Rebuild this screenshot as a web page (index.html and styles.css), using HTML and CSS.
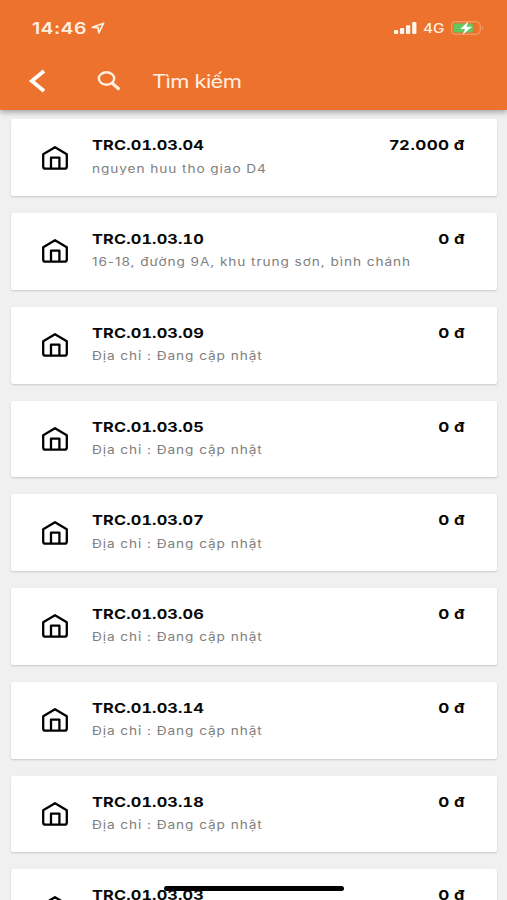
FILE: index.html
```html
<!DOCTYPE html>
<html lang="vi">
<head>
<meta charset="utf-8">
<title>Tìm kiếm</title>
<link rel="stylesheet" href="styles.css">
</head>
<body>
<svg class="defs" width="0" height="0" aria-hidden="true">
  <symbol id="home" viewBox="0 0 28 26">
    <path d="M2.200 9.200 14 2.200 25.800 9.200V21.500Q25.800 23.700 23.600 23.700H4.400Q2.200 23.700 2.200 21.500Z M10 23.700V12.700H18.400V23.700" fill="none" stroke="#000" stroke-width="2.300" stroke-linejoin="round"/>
  </symbol>
</svg>
<div class="screen">
  <header class="header">
    <div class="status">
      <span class="time"><span class="wide">14:46</span></span>
      <svg class="location" width="14" height="12" viewBox="0 0 14 12"><path d="M1.300 5.300 12.600 1.200 7.800 10.800 7 5.600Z" fill="none" stroke="#fff0e2" stroke-width="1.700" stroke-linejoin="round"/></svg>
      <svg class="signal" width="23" height="12" viewBox="0 0 23 12" fill="#fff7ef"><rect x="0" y="8" width="4.200" height="4" rx="1"/><rect x="6" y="6" width="4.200" height="6" rx="1"/><rect x="12" y="3.200" width="4.200" height="8.800" rx="1"/><rect x="18.200" y="0" width="4.200" height="12" rx="1"/></svg>
      <span class="network"><span class="wide">4G</span></span>
      <svg class="battery" width="33" height="14" viewBox="0 0 33 14"><rect x=".6" y=".8" width="28.600" height="12.400" rx="3.500" fill="none" stroke="#f3a779"/><path d="M30.800 5v4q2.200-2 0-4Z" fill="#f3a779"/><rect x="2.400" y="2.500" width="19.500" height="9" rx="2" fill="#63c75c"/><path d="M17.200.5 9.300 8H14.100L11.600 13.700 21.200 5.700H15.700Z" fill="#fff"/></svg>
    </div>
    <div class="toolbar">
      <svg class="back" width="18" height="24" viewBox="0 0 18 24"><path d="M16 2 3.800 12 16 22" fill="none" stroke="#fff" stroke-width="3.700"/></svg>
      <svg class="search" width="24" height="20" viewBox="0 0 24 20" fill="none" stroke="#fff0e2"><ellipse cx="9.500" cy="7.500" rx="7.700" ry="6.200" stroke-width="2.400"/><path d="m15 12 7.400 6.500" stroke-width="3"/></svg>
      <span class="query"><span class="wide">Tìm kiếm</span></span>
    </div>
  </header>
  <main class="list">
    <article class="card"><svg class="home"><use href="#home"/></svg><div class="info"><div class="code"><span class="wide">TRC.01.03.04</span></div><div class="address"><span class="wide">nguyen huu tho giao D4</span></div></div><div class="price"><span class="wide">72.000 đ</span></div></article>
    <article class="card"><svg class="home"><use href="#home"/></svg><div class="info"><div class="code"><span class="wide">TRC.01.03.10</span></div><div class="address"><span class="wide">16-18, đường 9A, khu trung sơn, bình chánh</span></div></div><div class="price"><span class="wide">0 đ</span></div></article>
    <article class="card"><svg class="home"><use href="#home"/></svg><div class="info"><div class="code"><span class="wide">TRC.01.03.09</span></div><div class="address"><span class="wide">Địa chỉ : Đang cập nhật</span></div></div><div class="price"><span class="wide">0 đ</span></div></article>
    <article class="card"><svg class="home"><use href="#home"/></svg><div class="info"><div class="code"><span class="wide">TRC.01.03.05</span></div><div class="address"><span class="wide">Địa chỉ : Đang cập nhật</span></div></div><div class="price"><span class="wide">0 đ</span></div></article>
    <article class="card"><svg class="home"><use href="#home"/></svg><div class="info"><div class="code"><span class="wide">TRC.01.03.07</span></div><div class="address"><span class="wide">Địa chỉ : Đang cập nhật</span></div></div><div class="price"><span class="wide">0 đ</span></div></article>
    <article class="card"><svg class="home"><use href="#home"/></svg><div class="info"><div class="code"><span class="wide">TRC.01.03.06</span></div><div class="address"><span class="wide">Địa chỉ : Đang cập nhật</span></div></div><div class="price"><span class="wide">0 đ</span></div></article>
    <article class="card"><svg class="home"><use href="#home"/></svg><div class="info"><div class="code"><span class="wide">TRC.01.03.14</span></div><div class="address"><span class="wide">Địa chỉ : Đang cập nhật</span></div></div><div class="price"><span class="wide">0 đ</span></div></article>
    <article class="card"><svg class="home"><use href="#home"/></svg><div class="info"><div class="code"><span class="wide">TRC.01.03.18</span></div><div class="address"><span class="wide">Địa chỉ : Đang cập nhật</span></div></div><div class="price"><span class="wide">0 đ</span></div></article>
    <article class="card"><svg class="home"><use href="#home"/></svg><div class="info"><div class="code"><span class="wide">TRC.01.03.03</span></div></div><div class="price"><span class="wide">0 đ</span></div></article>
  </main>
  <div class="home-indicator"></div>
</div>
</body>
</html>
```
FILE: styles.css
```css
* { box-sizing: border-box; }
html, body { margin: 0; height: 900px; overflow: hidden; }
body { font-family: Inter, "Liberation Sans", sans-serif; background: #f0f0f0; }
.defs { position: absolute; }
.screen { position: relative; height: 900px; overflow: hidden; }
.wide { display: inline-block; white-space: nowrap; transform: scaleX(1.22); transform-origin: left center; }

.header { position: relative; z-index: 1; height: 110px; background: #ed722d; box-shadow: 0 2px 6px rgba(0, 0, 0, .35); color: #fff0e2; }
.status { display: flex; align-items: center; height: 55px; padding: 0 23px 0 32px; }
.time { width: 59px; font-size: 16px; font-weight: 600; letter-spacing: .3px; }
.location { flex: none; }
.signal { flex: none; margin-left: auto; }
.network { width: 28px; margin-left: 6px; padding-top: 1px; font-size: 12.500px; font-weight: 500; }
.battery { flex: none; }
.toolbar { display: flex; align-items: center; height: 52px; padding-left: 28px; }
.back { flex: none; }
.search { flex: none; margin-left: 51px; }
.query { margin-left: 31px; font-size: 18px; letter-spacing: -.5px; }

.list { display: flex; flex-direction: column; gap: 17px; padding: 9.300px 10.500px 0 11px; }
.card { flex: none; display: flex; height: 76.750px; padding: 0 32px 0 30px; background: #fff; border-radius: 2px; box-shadow: 0 1px 2px rgba(0, 0, 0, .17); }
.home { flex: none; width: 28px; height: 26px; margin-top: 25.400px; }
.info { flex: 1; margin-left: 23px; padding-top: 17px; }
.code, .price { font-size: 13.400px; line-height: 18px; font-weight: 700; color: #080808; }
.code { font-variant-numeric: tabular-nums; letter-spacing: .120px; }
.address { margin-top: 6.400px; font-size: 11.200px; line-height: 17px; letter-spacing: .760px; color: #808080; }
.price { padding-top: 17px; letter-spacing: .300px; }
.price .wide { transform-origin: right center; }
.home-indicator { position: absolute; z-index: 2; left: 164px; top: 886px; width: 180px; height: 5px; border-radius: 3px; background: #000; }
```
